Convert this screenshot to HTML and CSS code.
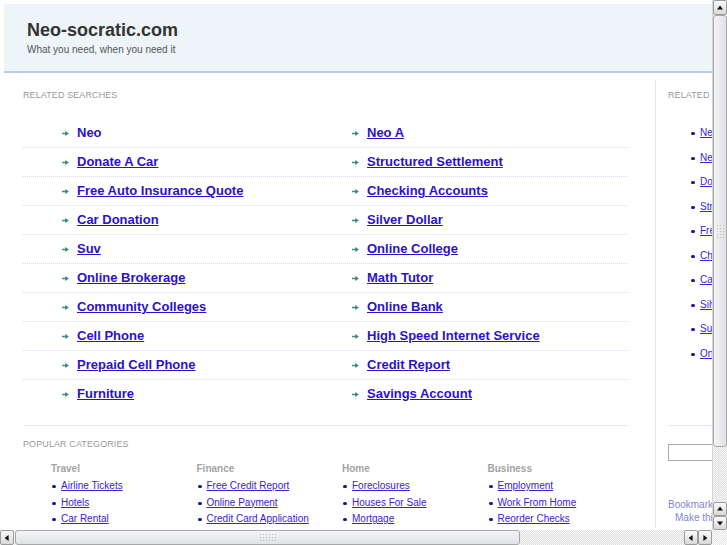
FILE: index.html
```html
<!DOCTYPE html>
<html>

<head>
    <meta charset="utf-8" />
    <title>Neo-socratic.com</title>
    <link rel="stylesheet" href="styles.css">
</head>

<body>
    <div class="screen">
        <div class="viewport">
            <div class="page">
                <div class="header">
                    <h1 class="site-name">Neo-socratic.com</h1>
                    <p class="tagline">What you need, when you need it</p>
                </div>

                <div class="main">
                    <div class="content">
                        <h2 class="section-title">Related Searches</h2>
                        <div class="searches">
                            <div class="search-row">
                                <a class="search-link first" href="#"><svg class="arrow" width="7" height="5" viewBox="0 0 7 5"><path d="M0 1.8h3.2V0L7 2.5 3.2 5V3.2H0z" /></svg>Neo</a>
                                <a class="search-link" href="#"><svg class="arrow" width="7" height="5" viewBox="0 0 7 5"><path d="M0 1.8h3.2V0L7 2.5 3.2 5V3.2H0z" /></svg>Neo A</a>
                            </div>
                            <div class="search-row">
                                <a class="search-link" href="#"><svg class="arrow" width="7" height="5" viewBox="0 0 7 5"><path d="M0 1.8h3.2V0L7 2.5 3.2 5V3.2H0z" /></svg>Donate A Car</a>
                                <a class="search-link" href="#"><svg class="arrow" width="7" height="5" viewBox="0 0 7 5"><path d="M0 1.8h3.2V0L7 2.5 3.2 5V3.2H0z" /></svg>Structured Settlement</a>
                            </div>
                            <div class="search-row">
                                <a class="search-link" href="#"><svg class="arrow" width="7" height="5" viewBox="0 0 7 5"><path d="M0 1.8h3.2V0L7 2.5 3.2 5V3.2H0z" /></svg>Free Auto Insurance Quote</a>
                                <a class="search-link" href="#"><svg class="arrow" width="7" height="5" viewBox="0 0 7 5"><path d="M0 1.8h3.2V0L7 2.5 3.2 5V3.2H0z" /></svg>Checking Accounts</a>
                            </div>
                            <div class="search-row">
                                <a class="search-link" href="#"><svg class="arrow" width="7" height="5" viewBox="0 0 7 5"><path d="M0 1.8h3.2V0L7 2.5 3.2 5V3.2H0z" /></svg>Car Donation</a>
                                <a class="search-link" href="#"><svg class="arrow" width="7" height="5" viewBox="0 0 7 5"><path d="M0 1.8h3.2V0L7 2.5 3.2 5V3.2H0z" /></svg>Silver Dollar</a>
                            </div>
                            <div class="search-row">
                                <a class="search-link" href="#"><svg class="arrow" width="7" height="5" viewBox="0 0 7 5"><path d="M0 1.8h3.2V0L7 2.5 3.2 5V3.2H0z" /></svg>Suv</a>
                                <a class="search-link" href="#"><svg class="arrow" width="7" height="5" viewBox="0 0 7 5"><path d="M0 1.8h3.2V0L7 2.5 3.2 5V3.2H0z" /></svg>Online College</a>
                            </div>
                            <div class="search-row">
                                <a class="search-link" href="#"><svg class="arrow" width="7" height="5" viewBox="0 0 7 5"><path d="M0 1.8h3.2V0L7 2.5 3.2 5V3.2H0z" /></svg>Online Brokerage</a>
                                <a class="search-link" href="#"><svg class="arrow" width="7" height="5" viewBox="0 0 7 5"><path d="M0 1.8h3.2V0L7 2.5 3.2 5V3.2H0z" /></svg>Math Tutor</a>
                            </div>
                            <div class="search-row">
                                <a class="search-link" href="#"><svg class="arrow" width="7" height="5" viewBox="0 0 7 5"><path d="M0 1.8h3.2V0L7 2.5 3.2 5V3.2H0z" /></svg>Community Colleges</a>
                                <a class="search-link" href="#"><svg class="arrow" width="7" height="5" viewBox="0 0 7 5"><path d="M0 1.8h3.2V0L7 2.5 3.2 5V3.2H0z" /></svg>Online Bank</a>
                            </div>
                            <div class="search-row">
                                <a class="search-link" href="#"><svg class="arrow" width="7" height="5" viewBox="0 0 7 5"><path d="M0 1.8h3.2V0L7 2.5 3.2 5V3.2H0z" /></svg>Cell Phone</a>
                                <a class="search-link" href="#"><svg class="arrow" width="7" height="5" viewBox="0 0 7 5"><path d="M0 1.8h3.2V0L7 2.5 3.2 5V3.2H0z" /></svg>High Speed Internet Service</a>
                            </div>
                            <div class="search-row">
                                <a class="search-link" href="#"><svg class="arrow" width="7" height="5" viewBox="0 0 7 5"><path d="M0 1.8h3.2V0L7 2.5 3.2 5V3.2H0z" /></svg>Prepaid Cell Phone</a>
                                <a class="search-link" href="#"><svg class="arrow" width="7" height="5" viewBox="0 0 7 5"><path d="M0 1.8h3.2V0L7 2.5 3.2 5V3.2H0z" /></svg>Credit Report</a>
                            </div>
                            <div class="search-row">
                                <a class="search-link" href="#"><svg class="arrow" width="7" height="5" viewBox="0 0 7 5"><path d="M0 1.8h3.2V0L7 2.5 3.2 5V3.2H0z" /></svg>Furniture</a>
                                <a class="search-link" href="#"><svg class="arrow" width="7" height="5" viewBox="0 0 7 5"><path d="M0 1.8h3.2V0L7 2.5 3.2 5V3.2H0z" /></svg>Savings Account</a>
                            </div>
                        </div>

                        <div class="popular">
                            <h2 class="section-title">Popular Categories</h2>
                            <div class="categories">
                                <div class="category">
                                    <h3>Travel</h3>
                                    <ul class="small-links">
                                        <li><a href="#">Airline Tickets</a></li>
                                        <li><a href="#">Hotels</a></li>
                                        <li><a href="#">Car Rental</a></li>
                                    </ul>
                                </div>
                                <div class="category">
                                    <h3>Finance</h3>
                                    <ul class="small-links">
                                        <li><a href="#">Free Credit Report</a></li>
                                        <li><a href="#">Online Payment</a></li>
                                        <li><a href="#">Credit Card Application</a></li>
                                    </ul>
                                </div>
                                <div class="category">
                                    <h3>Home</h3>
                                    <ul class="small-links">
                                        <li><a href="#">Foreclosures</a></li>
                                        <li><a href="#">Houses For Sale</a></li>
                                        <li><a href="#">Mortgage</a></li>
                                    </ul>
                                </div>
                                <div class="category">
                                    <h3>Business</h3>
                                    <ul class="small-links">
                                        <li><a href="#">Employment</a></li>
                                        <li><a href="#">Work From Home</a></li>
                                        <li><a href="#">Reorder Checks</a></li>
                                    </ul>
                                </div>
                            </div>
                        </div>
                    </div>

                    <div class="sidebar">
                        <h2 class="section-title">Related Searches</h2>
                        <ul class="small-links side-links">
                            <li><a href="#">Neo</a></li>
                            <li><a href="#">Neo A</a></li>
                            <li><a href="#">Donate A Car</a></li>
                            <li><a href="#">Structured Settlement</a></li>
                            <li><a href="#">Free Auto Insurance Quote</a></li>
                            <li><a href="#">Checking Accounts</a></li>
                            <li><a href="#">Car Donation</a></li>
                            <li><a href="#">Silver Dollar</a></li>
                            <li><a href="#">Suv</a></li>
                            <li><a href="#">Online College</a></li>
                        </ul>
                        <div class="search-box">
                            <input class="search-input" type="text">
                        </div>
                        <p class="bookmark">Bookmark this page</p>
                        <p class="bookmark indent">Make this your homepage</p>
                    </div>
                </div>
            </div>
        </div>

        <div class="vscroll">
            <div class="sb-btn up"></div>
            <div class="sb-thumb vertical"><span class="grip"></span></div>
            <div class="sb-track"></div>
            <div class="sb-btn up"></div>
            <div class="sb-btn down"></div>
        </div>
        <div class="hscroll">
            <div class="sb-btn left"></div>
            <div class="sb-thumb horizontal"><span class="grip"></span></div>
            <div class="sb-track"></div>
            <div class="sb-btn left"></div>
            <div class="sb-btn right"></div>
        </div>
        <div class="corner"></div>
    </div>
</body>

</html>
```

FILE: styles.css
```css
html,
body {
    margin: 0;
    padding: 0;
    background: #fff;
    overflow: hidden;
}

body {
    font-family: "Liberation Sans", Arial, sans-serif;
}

.screen {
    display: grid;
    grid-template-columns: 712px 15px;
    grid-template-rows: 530px 15px;
    width: 727px;
    height: 545px;
}

.viewport {
    overflow: hidden;
    background: #fff;
}

.page {
    width: 960px;
    padding: 4px 0 0 4px;
}

/* header */
.header {
    background: #eef5f8;
    border-bottom: 2px solid #b9cbec;
    padding: 15px 23px 14px;
}

.site-name {
    margin: 0;
    font-size: 18px;
    line-height: 22px;
    font-weight: bold;
    color: #333;
}

.tagline {
    margin: 2px 0 0;
    font-size: 10px;
    line-height: 14px;
    color: #555;
}

/* columns */
.main {
    display: flex;
    margin-top: 7px;
    padding-left: 19px;
}

.content {
    width: 605px;
    padding-top: 9px;
}

.sidebar {
    width: 220px;
    margin-left: 27px;
    padding: 9px 0 0 12px;
    border-left: 1px solid #dde5f4;
}

.section-title {
    margin: 0;
    font-size: 9px;
    line-height: 12px;
    font-weight: normal;
    text-transform: uppercase;
    letter-spacing: 0.1px;
    color: #999;
}

/* related searches */
.searches {
    margin-top: 18px;
}

.search-row {
    display: grid;
    grid-template-columns: 290px 1fr;
    height: 27px;
    padding-bottom: 1px;
    align-items: center;
    border-bottom: 1px dotted #cfdcf1;
}

.search-row:last-child {
    border-bottom: none;
}

.search-link {
    padding-left: 39px;
    font-size: 13px;
    font-weight: bold;
    color: #2b12c9;
    text-decoration: underline;
    white-space: nowrap;
}

.search-link.first {
    text-decoration: none;
}

.arrow {
    fill: #3f8c82;
    margin-right: 8px;
    vertical-align: 1px;
}

/* popular categories */
.popular {
    margin-top: 17px;
    border-top: 1px solid #e3eaf3;
    padding-top: 12px;
}

.categories {
    display: grid;
    grid-template-columns: repeat(4, 145.5px);
    margin-top: 12px;
    padding-left: 28px;
}

.category h3 {
    margin: 0 0 2px;
    font-size: 10px;
    line-height: 14px;
    color: #a3a3a3;
}

.small-links {
    list-style: none;
    margin: 0;
    padding: 0;
}

.small-links li {
    position: relative;
    padding-left: 10px;
    font-size: 10px;
    line-height: 16.5px;
    white-space: nowrap;
}

.small-links li::before {
    content: "";
    position: absolute;
    left: 1px;
    top: 7px;
    width: 4px;
    height: 3px;
    border-radius: 2px;
    background: #1d1490;
}

.small-links a {
    color: #3a22d2;
    text-decoration: underline;
}

/* sidebar */
.side-links {
    margin-top: 20px;
    padding-left: 22px;
    padding-bottom: 59px;
    border-bottom: 1px solid #e3eaf3;
}

.side-links li {
    line-height: 24.5px;
}

.side-links li::before {
    top: 11px;
}

.search-box {
    margin-top: 18px;
}

.search-input {
    display: block;
    width: 150px;
    height: 17px;
    box-sizing: border-box;
    margin: 0;
    border: 1px solid #a9a9a9;
    background: #fff;
}

.bookmark {
    margin: 0;
    font-size: 10px;
    line-height: 13px;
    color: #8585cf;
    white-space: nowrap;
}

.bookmark:first-of-type {
    margin-top: 37px;
}

.bookmark.indent {
    padding-left: 7px;
}

/* fake scrollbars */
.vscroll,
.hscroll {
    display: flex;
    background: #f2f2f2;
}

.vscroll {
    flex-direction: column;
    border-left: 1px solid #d6d6d6;
}

.sb-track {
    flex: 1;
    background: repeating-conic-gradient(#dcdcdc 0 25%, #fbfbfb 0 50%) 0 0 / 2px 2px;
}

.sb-btn {
    position: relative;
    flex: none;
    box-sizing: border-box;
    border: 1px solid #9c9c9c;
    border-radius: 2px;
    background: linear-gradient(#fbfbfb, #d9d9d9);
}

.vscroll .sb-btn {
    width: 14px;
    height: 14px;
}

.hscroll .sb-btn {
    width: 14px;
    height: 15px;
}

.sb-btn::after {
    content: "";
    position: absolute;
    left: 50%;
    top: 50%;
    width: 0;
    height: 0;
    border: 3px solid transparent;
}

.sb-btn.up::after {
    border-bottom: 4px solid #111;
    border-top: none;
    transform: translate(-50%, -60%);
}

.sb-btn.down::after {
    border-top: 4px solid #111;
    border-bottom: none;
    transform: translate(-50%, -40%);
}

.sb-btn.left::after {
    border-right: 4px solid #111;
    border-left: none;
    transform: translate(-60%, -50%);
}

.sb-btn.right::after {
    border-left: 4px solid #111;
    border-right: none;
    transform: translate(-40%, -50%);
}

.vscroll .sb-btn.up:first-child {
    height: 15px;
}

.sb-thumb {
    display: flex;
    align-items: center;
    justify-content: center;
    flex: none;
    box-sizing: border-box;
    border: 1px solid #a7a7a7;
    border-radius: 3px;
}

.sb-thumb.vertical {
    width: 14px;
    height: 432px;
    background: linear-gradient(to right, #f3f5f7, #dfe2e6);
}

.sb-thumb.horizontal {
    width: 505px;
    height: 15px;
    margin-left: 1px;
    background: linear-gradient(#f3f5f7, #dfe2e6);
}

.grip {
    background: radial-gradient(circle, #b9b9b9 0.6px, transparent 0.9px) 0 0 / 3px 3px;
}

.vertical .grip {
    width: 9px;
    height: 15px;
}

.horizontal .grip {
    width: 17px;
    height: 9px;
}

.corner {
    background: repeating-conic-gradient(#e4e4e4 0 25%, #fff 0 50%) 0 0 / 2px 2px;
}
```
